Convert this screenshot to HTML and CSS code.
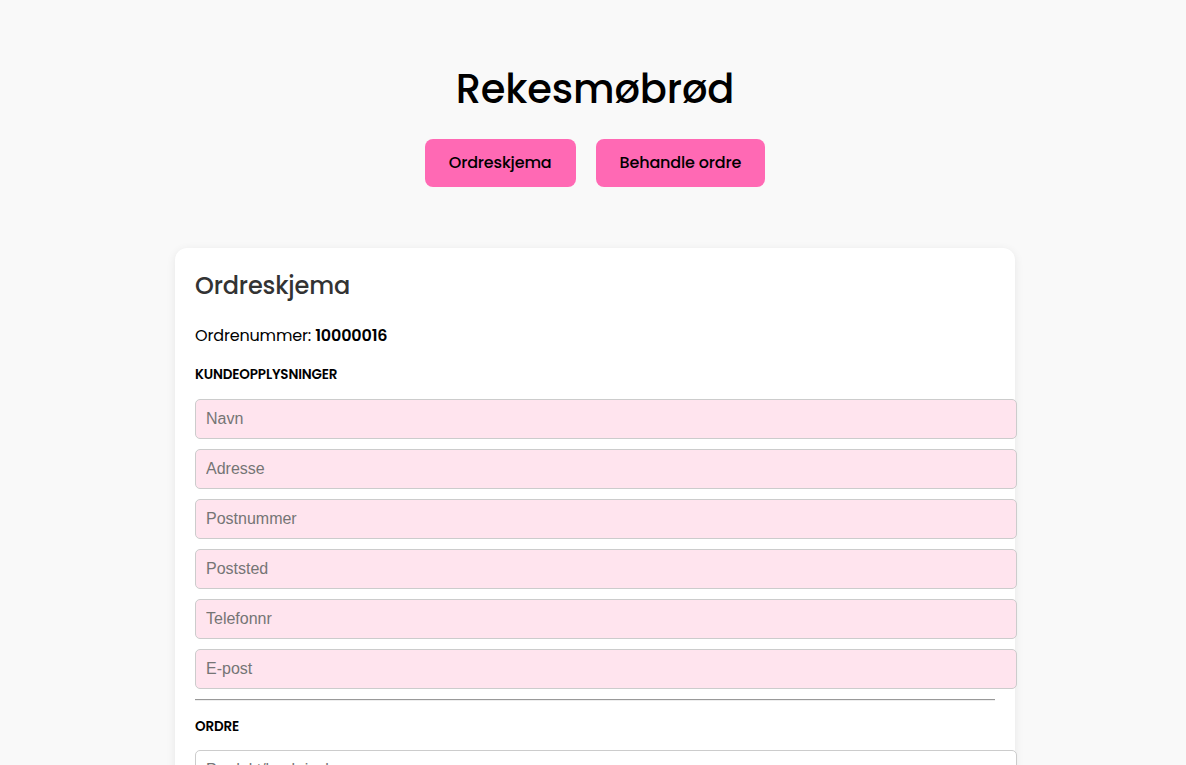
FILE: index.html
```html
<!DOCTYPE html>
<html lang="no">
<head>
<meta charset="utf-8">
<title>Rekesmøbrød</title>
<link rel="stylesheet" href="styles.css">
</head>
<body>
<header class="site-header">
  <h1 class="site-title">Rekesmøbrød</h1>
  <nav class="nav">
    <button class="nav-btn" type="button">Ordreskjema</button>
    <button class="nav-btn" type="button">Behandle ordre</button>
  </nav>
</header>
<main class="card">
  <h2 class="card-title">Ordreskjema</h2>
  <p class="order-no">Ordrenummer: <strong>10000016</strong></p>
  <h3 class="section-label">KUNDEOPPLYSNINGER</h3>
  <form class="form">
    <input class="field field-pink" type="text" placeholder="Navn">
    <input class="field field-pink" type="text" placeholder="Adresse">
    <input class="field field-pink" type="text" placeholder="Postnummer">
    <input class="field field-pink" type="text" placeholder="Poststed">
    <input class="field field-pink" type="text" placeholder="Telefonnr">
    <input class="field field-pink" type="text" placeholder="E-post">
    <hr class="divider">
    <h3 class="section-label">ORDRE</h3>
    <input class="field" type="text" placeholder="Produkt/beskrivelse">
    <input class="field" type="text" placeholder="Antall">
  </form>
</main>
</body>
</html>
```
FILE: styles.css
```css
html, body {
  margin: 0;
  padding: 0;
}
body {
  background: #f9f9f9;
  font-family: Poppins, Inter, "Noto Sans", sans-serif;
  color: #000;
  padding-left: 4px;
  letter-spacing: -0.01em;
}
.site-header {
  display: flex;
  flex-direction: column;
  align-items: center;
  padding-top: 62px;
}
.site-title {
  margin: 0;
  font-size: 40px;
  font-weight: 500;
  line-height: 54px;
}
.nav {
  display: flex;
  gap: 20px;
  margin-top: 23px;
}
.nav-btn {
  background: #ff69b4;
  border: none;
  border-radius: 8px;
  padding: 12px 24px;
  font-family: inherit;
  font-size: 16px;
  font-weight: 500;
  line-height: 24px;
  letter-spacing: inherit;
  color: #000;
}
.card {
  width: 800px;
  margin: 61px auto 0;
  padding: 20px;
  background: #fff;
  border-radius: 12px;
  box-shadow: 0 2px 10px rgba(0, 0, 0, 0.08);
}
.card-title {
  margin: 0;
  font-size: 24px;
  font-weight: 500;
  color: #333;
  line-height: 36px;
}
.order-no {
  margin: 20px 0 0;
  font-size: 16px;
  line-height: 24px;
}
.order-no strong {
  font-weight: 600;
}
.section-label {
  margin: 17px 0 14px;
  font-size: 13.5px;
  font-weight: 600;
  line-height: 20px;
}
.form {
  display: flex;
  flex-direction: column;
  align-items: flex-start;
}
.form .section-label {
  margin: 16px 0 13px;
}
.field {
  width: 800px;
  padding: 10px;
  margin: 0 0 10px;
  border: 1px solid #ccc;
  border-radius: 5px;
  background: #fff;
  font-family: "Liberation Sans", Arial, sans-serif;
  font-size: 16px;
  line-height: 18px;
  letter-spacing: normal;
  color: #000;
}
.field::placeholder {
  color: #757575;
}
.field-pink {
  background: #ffe4ee;
}
.divider {
  align-self: stretch;
  margin: 0;
  border: none;
  border-top: 1px solid #999;
  border-bottom: 1px solid #eee;
  height: 0;
}
```
